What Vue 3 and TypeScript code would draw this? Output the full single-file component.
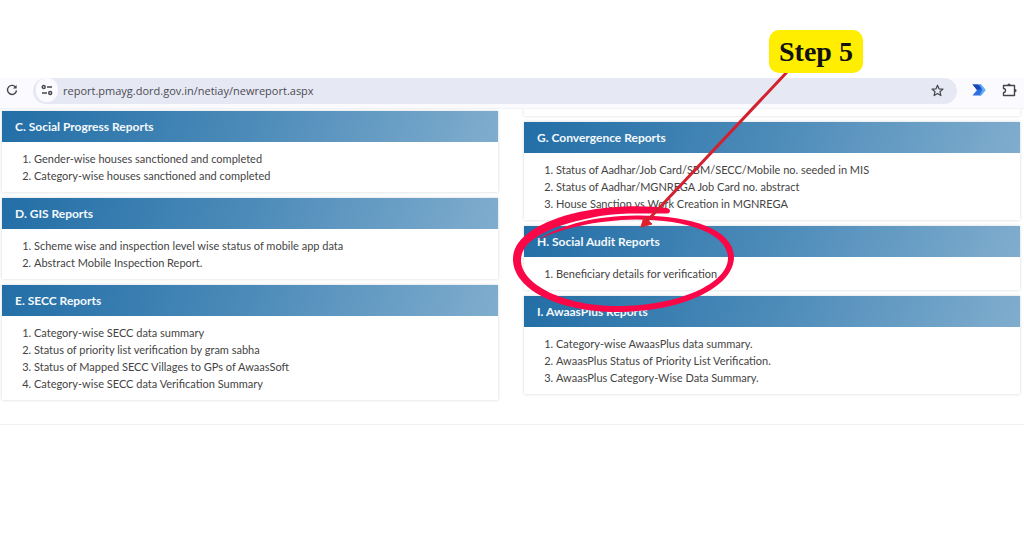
<script setup lang="ts">
import { ref } from 'vue'

interface Report {
  title: string
  items: string[]
  marked?: boolean
}

const address = ref('report.pmayg.dord.gov.in/netiay/newreport.aspx')

const leftReports: Report[] = [
  {
    title: 'C. Social Progress Reports',
    items: ['Gender-wise houses sanctioned and completed', 'Category-wise houses sanctioned and completed'],
  },
  {
    title: 'D. GIS Reports',
    items: ['Scheme wise and inspection level wise status of mobile app data', 'Abstract Mobile Inspection Report.'],
  },
  {
    title: 'E. SECC Reports',
    items: [
      'Category-wise SECC data summary',
      'Status of priority list verification by gram sabha',
      'Status of Mapped SECC Villages to GPs of AwaasSoft',
      'Category-wise SECC data Verification Summary',
    ],
  },
]

const rightReports: Report[] = [
  {
    title: 'G. Convergence Reports',
    items: [
      'Status of Aadhar/Job Card/SBM/SECC/Mobile no. seeded in MIS',
      'Status of Aadhar/MGNREGA Job Card no. abstract',
      'House Sanction vs Work Creation in MGNREGA',
    ],
  },
  { title: 'H. Social Audit Reports', items: ['Beneficiary details for verification'], marked: true },
  {
    title: 'I. AwaasPlus Reports',
    items: [
      'Category-wise AwaasPlus data summary.',
      'AwaasPlus Status of Priority List Verification.',
      'AwaasPlus Category-Wise Data Summary.',
    ],
  },
]
</script>

<template>
  <div class="page">
    <header class="toolbar">
      <button class="icon-btn reload" aria-label="Reload">
        <svg width="12" height="12" viewBox="0 0 12 12" fill="none" stroke="#45464c" stroke-width="1.4">
          <path d="M9.9 3.6A4.5 4.5 0 1 0 10.5 6.4" />
          <path d="M10.6 0.9V4.6H6.9Z" fill="#45464c" stroke="none" />
        </svg>
      </button>
      <div class="address">
        <button class="icon-btn site" aria-label="Site information">
          <svg width="12" height="12" viewBox="0 0 12 12" fill="none" stroke="#45464c" stroke-width="1.4">
            <circle cx="2.7" cy="3" r="1.5" />
            <path d="M6 3H11M1 9H6" />
            <circle cx="9.2" cy="9" r="1.5" />
          </svg>
        </button>
        <input v-model="address" type="text" aria-label="Address" spellcheck="false" />
        <button class="icon-btn" aria-label="Bookmark">
          <svg width="13" height="13" viewBox="0 0 13 13" fill="none" stroke="#45464c" stroke-width="1.2" stroke-linejoin="round">
            <path d="M6.5 1.2 8 4.8 12 5.1 9 7.7 9.9 11.6 6.5 9.5 3.1 11.6 4 7.7 1 5.1 5 4.8Z" />
          </svg>
        </button>
      </div>
      <button class="icon-btn ext" aria-label="Extension">
        <svg width="14" height="12" viewBox="0 0 14 12">
          <path d="M0.5 0.5H9L13.5 6 9 11.5H0.5L5 6Z" fill="#2f6fe4" />
          <path d="M0.5 0.5H6L9.5 5 5 6Z" fill="#1747b8" />
          <path d="M9 0.5 13.5 6 9 11.5H7.5L10.5 6 7.5 0.5Z" fill="#63b0f5" />
        </svg>
      </button>
      <button class="icon-btn" aria-label="Extensions">
        <svg width="15" height="15" viewBox="0 0 15 15" fill="none" stroke="#45464c" stroke-width="1.4" stroke-linejoin="round">
          <path d="M1.5 2.5H12.5V12.5H1.5V9.5A2 2 0 0 0 1.5 5.5Z" />
          <path d="M5.4 2A1.6 1.6 0 0 1 8.6 2ZM13 5.9A1.6 1.6 0 0 1 13 9.1Z" fill="#45464c" stroke="none" />
        </svg>
      </button>
    </header>

    <main class="columns">
      <div class="column left">
        <section v-for="report in leftReports" :key="report.title" class="card">
          <h2>{{ report.title }}</h2>
          <ol>
            <li v-for="item in report.items" :key="item"><a href="#">{{ item }}</a></li>
          </ol>
        </section>
      </div>
      <div class="column">
        <div class="card-end"></div>
        <section v-for="report in rightReports" :key="report.title" class="card" :class="{ marked: report.marked }">
          <h2>{{ report.title }}</h2>
          <ol>
            <li v-for="item in report.items" :key="item"><a href="#">{{ item }}</a></li>
          </ol>
          <template v-if="report.marked">
            <svg class="marks" width="380" height="300" viewBox="500 20 380 300" aria-hidden="true">
              <path
                fill="#f90747"
                d="M667 208C645 205 605 205 571 214C534 224 513 240 513 259C513 290 560 312 617 312C683 312 734 287 734 257C734 230 692 215 636 215.5C598 216 563 223 536 241C558 229 597 220 636 219.5C690 219.5 728 235 728 258C728 283 680 306 617 306C565 306 521 285 521 260C521 240 550 225 600 216C625 212 645 214 667 213.5C671 213 671 209 667 208Z"
              />
              <path d="M788 71 647 221" stroke="#d3202f" stroke-width="3" />
              <path d="M644 217 652 224 641 227Z" fill="#e0202c" stroke="#e0202c" stroke-linejoin="round" />
            </svg>
            <strong class="step">Step 5</strong>
          </template>
        </section>
      </div>
    </main>
    <hr />
  </div>
</template>

<style>
body {
  margin: 0;
  background: #fff;
}
</style>

<style scoped>
.page {
  padding-top: 78px;
  font-family: Lato, "Liberation Sans", sans-serif;
}
.toolbar {
  display: flex;
  align-items: flex-start;
  height: 30px;
  padding: 0 6px 0 3px;
  border-bottom: 1px solid #f3f3f6;
  background: #fbfbff;
}
.icon-btn {
  display: flex;
  flex: none;
  align-items: center;
  justify-content: center;
  width: 18px;
  height: 24px;
  padding: 0;
  border: 0;
  background: none;
}
.reload {
  margin-right: 12px;
}
.address {
  display: flex;
  flex: 1;
  align-items: flex-start;
  height: 26px;
  padding: 0 11px 0 3px;
  border-radius: 13px;
  background: #e6e8f3;
}
.site {
  width: 22px;
  border-radius: 12px;
  background: #fbfbff;
}
.address input {
  flex: 1;
  min-width: 0;
  height: 24px;
  padding: 0 0 0 5px;
  border: 0;
  outline: 0;
  background: none;
  color: #4b4c53;
  font: 11px "Open Sans", sans-serif;
}
.ext {
  margin: 0 12px 0 13px;
}
.columns {
  display: grid;
  grid-template-columns: 1fr 1fr;
  gap: 26px;
  padding: 0 4px 0 2px;
}
.column {
  display: flex;
  flex-direction: column;
  gap: 6px;
}
.left {
  padding-top: 2px;
}
.card,
.card-end {
  box-shadow: 0 0 3px #cfd6d8;
  background: #fff;
}
.card-end {
  height: 7px;
  clip-path: inset(0 -4px -4px -4px);
}
.marked {
  position: relative;
  z-index: 1;
}
h2 {
  margin: 0;
  padding: 0 13px;
  background: linear-gradient(110deg, #226ea6, #4c8bb9 50%, #80adce);
  color: #f4f9fc;
  font-size: 12px;
  line-height: 31px;
}
ol {
  margin: 0;
  padding: 8px 8px 8px 32px;
  color: #444;
  font-size: 11px;
  line-height: 17px;
}
a {
  color: inherit;
  text-decoration: none;
}
.marks {
  position: absolute;
  top: -206px;
  left: -24px;
  pointer-events: none;
}
.step {
  position: absolute;
  top: -196px;
  left: 245px;
  padding: 0 10px;
  border-radius: 10px;
  background: #ffee00;
  color: #111;
  font: bold 28px/43px "Liberation Serif", serif;
  white-space: nowrap;
}
hr {
  margin: 24px 0 0;
  border: 0;
  border-top: 1px solid #f1f1f1;
}
</style>
